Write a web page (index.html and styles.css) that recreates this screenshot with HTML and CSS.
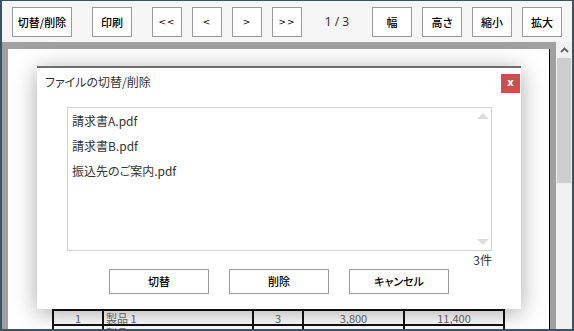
FILE: index.html
```html
<!DOCTYPE html>
<html lang="ja">
<head>
<meta charset="utf-8">
<link rel="stylesheet" href="styles.css">
</head>
<body>
<div class="app">
  <div class="toolbar">
    <button class="tb w60">切替/削除</button>
    <button class="tb w40 gap20">印刷</button>
    <button class="tb w30 gap20 sym">&lt;&lt;</button>
    <button class="tb w30 sym">&lt;</button>
    <button class="tb w30 sym">&gt;</button>
    <button class="tb w30 sym">&gt;&gt;</button>
    <span class="pageno">1 / 3</span>
    <button class="tb w40">幅</button>
    <button class="tb w40">高さ</button>
    <button class="tb w40">縮小</button>
    <button class="tb w40">拡大</button>
  </div>
  <div class="viewer">
    <div class="pagearea">
      <div class="page">
        <table class="items">
          <colgroup><col class="c1"><col class="c2"><col class="c3"><col class="c4"><col class="c5"></colgroup>
          <tr><td class="ctr">1</td><td>製品 1</td><td class="ctr">3</td><td class="ctr">3,800</td><td class="ctr">11,400</td></tr>
          <tr><td class="ctr">2</td><td>製品 2</td><td class="ctr">2</td><td class="ctr">4,200</td><td class="ctr">8,400</td></tr>
        </table>
      </div>
    </div>
    <div class="scrollbar">
      <div class="sb-arrow">
        <svg width="9" height="6" viewBox="0 0 9 6"><polyline points="1,5 4.5,1.5 8,5" fill="none" stroke="#606060" stroke-width="1.8"/></svg>
      </div>
      <div class="sb-thumb"></div>
    </div>
  </div>

  <div class="modal">
    <div class="modal-head">
      <span class="modal-title">ファイルの切替/削除</span>
      <span class="close">x</span>
    </div>
    <div class="listwrap">
      <div class="listbox">
        <div class="item">請求書A.pdf</div>
        <div class="item">請求書B.pdf</div>
        <div class="item">振込先のご案内.pdf</div>
        <span class="tri up"></span>
        <span class="tri down"></span>
      </div>
      <div class="count">3件</div>
    </div>
    <div class="actions">
      <button class="dbtn">切替</button>
      <button class="dbtn">削除</button>
      <button class="dbtn">キャンセル</button>
    </div>
  </div>
</div>
</body>
</html>
```

FILE: styles.css
```css
* { box-sizing: border-box; }
html, body { margin: 0; padding: 0; }
body {
  font-family: "Noto Sans CJK JP", "Noto Sans", sans-serif;
  font-feature-settings: "palt";
  background: #3d5166;
}
.app {
  position: relative;
  width: 574px;
  height: 331px;
  border-top: 1px solid #3d5166;
  border-left: 2px solid #3d5166;
  border-right: 2px solid #3d5166;
  border-bottom: 2px solid #3d5166;
  background: #f5f5f5;
  overflow: hidden;
  display: flex;
  flex-direction: column;
}
.toolbar {
  height: 41px;
  flex: none;
  display: flex;
  align-items: flex-start;
  padding: 6px 0 0 10px;
  gap: 10px;
  background: #f5f5f5;
}
.tb {
  height: 30px;
  margin: 0;
  padding: 0;
  background: #fff;
  border: 1px solid #9a9a9a;
  font-family: inherit;
  font-feature-settings: "palt";
  font-size: 11px;
  font-weight: 500;
  color: #000;
  line-height: 28px;
  cursor: pointer;
}
.tb.sym { font-family: "DejaVu Sans", sans-serif; font-size: 9px; letter-spacing: 1px; }
.w60 { width: 60px; }
.w40 { width: 40px; }
.w30 { width: 30px; }
.gap20 { margin-left: 10px; }
.pageno {
  width: 50px;
  height: 30px;
  line-height: 30px;
  text-align: center;
  font-size: 12px;
  color: #333;
  font-family: "Noto Sans", sans-serif;
}
.viewer {
  flex: 1;
  display: flex;
  background: #a0a0a0;
  min-height: 0;
}
.pagearea {
  flex: 1;
  padding: 7px 0 0 6px;
  overflow: hidden;
}
.page {
  width: 542px;
  height: 400px;
  background: #fff;
  border-right: 1px solid #000;
  padding: 260px 0 0 44px;
}
.items {
  border-collapse: collapse;
  table-layout: fixed;
  font-size: 11px;
  color: #666;
}
.items .c1 { width: 50px; }
.items .c2 { width: 150px; }
.items .c3 { width: 50px; }
.items .c4 { width: 101px; }
.items .c5 { width: 100px; }
.items td {
  border: 2px solid #111;
  height: 15px;
  padding: 0 2px;
  line-height: 12px;
  white-space: nowrap;
}
.items td.ctr { text-align: center; }
.scrollbar {
  width: 16px;
  flex: none;
  background: #f0f0f0;
  display: flex;
  flex-direction: column;
  align-items: center;
}
.sb-arrow {
  height: 16px;
  width: 16px;
  display: flex;
  align-items: center;
  justify-content: center;
}
.sb-thumb {
  width: 14px;
  height: 125px;
  background: #cdcdcd;
}

/* modal dialog overlays the viewer */
.modal {
  position: absolute;
  left: 35px;
  top: 65px;
  width: 484px;
  height: 243px;
  background: #fff;
  border-top: 2px solid #6e6e6e;
  box-shadow: 0 4px 22px rgba(0, 0, 0, 0.35);
  display: flex;
  flex-direction: column;
}
.modal-head {
  height: 39px;
  display: flex;
  align-items: flex-start;
  justify-content: space-between;
  padding: 6px 1px 0 8px;
}
.modal-title {
  font-size: 12px;
  color: #333;
  line-height: 16px;
}
.close {
  width: 19px;
  height: 19px;
  background: #c9504f;
  color: #fff;
  font-family: "DejaVu Sans", sans-serif;
  font-weight: bold;
  font-size: 10px;
  line-height: 18px;
  text-align: center;
}
.listwrap {
  padding: 0 29px 0 30px;
}
.listbox {
  position: relative;
  height: 144px;
  border: 1px solid #d2d2d2;
  padding: 0 4px;
}
.item {
  height: 25px;
  line-height: 25px;
  font-size: 12px;
  color: #333;
}
.tri {
  position: absolute;
  right: 2px;
  width: 0;
  height: 0;
  border-left: 6px solid transparent;
  border-right: 6px solid transparent;
}
.tri.up { top: 5px; border-bottom: 6px solid #dcdcdc; }
.tri.down { bottom: 5px; border-top: 6px solid #dcdcdc; }
.count {
  text-align: right;
  font-size: 12px;
  color: #333;
  line-height: 16px;
  height: 17px;
  margin-top: 1px;
}
.actions {
  display: flex;
  justify-content: center;
  gap: 20px;
}
.dbtn {
  width: 100px;
  height: 25px;
  margin: 0;
  padding: 0;
  background: #fff;
  border: 1px solid #9a9a9a;
  font-family: inherit;
  font-feature-settings: "palt";
  font-size: 11px;
  font-weight: 500;
  color: #000;
  line-height: 23px;
}
```
